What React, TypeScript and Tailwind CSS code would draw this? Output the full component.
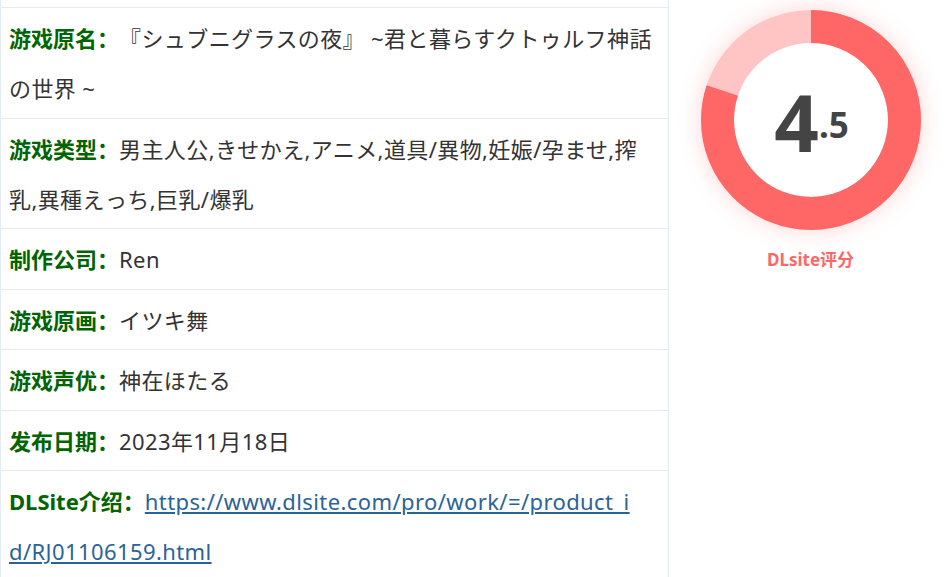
import React from 'react';

type Row = {
  label: string;
  value: React.ReactNode;
};

const rows: Row[] = [
  {
    label: '游戏原名',
    value: (
      <>
        『シュブニグラスの夜』 ~君と暮らすクトゥルフ神話
        <br />
        の世界 ~
      </>
    ),
  },
  {
    label: '游戏类型',
    value: (
      <>
        男主人公,きせかえ,アニメ,道具/異物,妊娠/孕ませ,搾
        <br />
        乳,異種えっち,巨乳/爆乳
      </>
    ),
  },
  { label: '制作公司', value: 'Ren' },
  { label: '游戏原画', value: 'イツキ舞' },
  { label: '游戏声优', value: '神在ほたる' },
  { label: '发布日期', value: '2023年11月18日' },
  {
    label: 'DLSite介绍',
    value: (
      <a href="#" className="text-[#2a6496] underline">
        https://www.dlsite.com/pro/work/=/product_i
        <br />
        d/RJ01106159.html
      </a>
    ),
  },
];

function Donut() {
  const r = 93.5;
  const c = 2 * Math.PI * r;
  const filled = c * 0.8;
  return (
    <div className="relative w-[220px] h-[220px] rounded-full shadow-[0_0_22px_rgba(255,102,102,0.28)]">
      <svg width="220" height="220" viewBox="0 0 220 220" className="block">
        <circle cx="110" cy="110" r={r} fill="none" stroke="#ffc4c4" strokeWidth="33" />
        <circle
          cx="110"
          cy="110"
          r={r}
          fill="none"
          stroke="#ff6666"
          strokeWidth="33"
          strokeDasharray={`${filled} ${c}`}
          transform="rotate(-90 110 110)"
        />
      </svg>
      <div className="absolute inset-0 flex items-center justify-center pt-[4px] pl-[2px]">
        <span className="text-[#444] font-bold text-[78px] leading-none">
          4<span className="text-[35px] align-[14px]">.5</span>
        </span>
      </div>
    </div>
  );
}

export default function App() {
  return (
    <div
      className="w-[952px] h-[577px] overflow-hidden bg-white grid grid-cols-[669px_1fr] [text-spacing-trim:space-all]"
      style={{ fontFamily: '"Noto Sans", "Noto Sans CJK JP", sans-serif' }}
    >
      <div className="border-l border-r border-[#e3ecf3]">
        <div className="h-[8px] border-b border-[#e3ecf3]" />
        {rows.map((row) => (
          <div
            key={row.label}
            className="border-b border-[#e3ecf3] pl-[8px] pr-[4px] py-[4.25px] text-[22px] leading-[50px] text-[#333] tracking-[0.4px] whitespace-nowrap"
          >
            <b className="text-[#006400] tracking-normal font-['Noto_Sans','Noto_Sans_CJK_SC',sans-serif]">
              {row.label}
              <span className="font-['Noto_Sans_CJK_SC']">：</span>
            </b>
            {row.value}
          </div>
        ))}
      </div>
      <div className="flex flex-col items-center pt-[10px]">
        <Donut />
        <div className="mt-[17px] text-[17px] font-bold text-[#ff6666] font-['Noto_Sans','Noto_Sans_CJK_SC',sans-serif]">
          DLsite评分
        </div>
      </div>
    </div>
  );
}
